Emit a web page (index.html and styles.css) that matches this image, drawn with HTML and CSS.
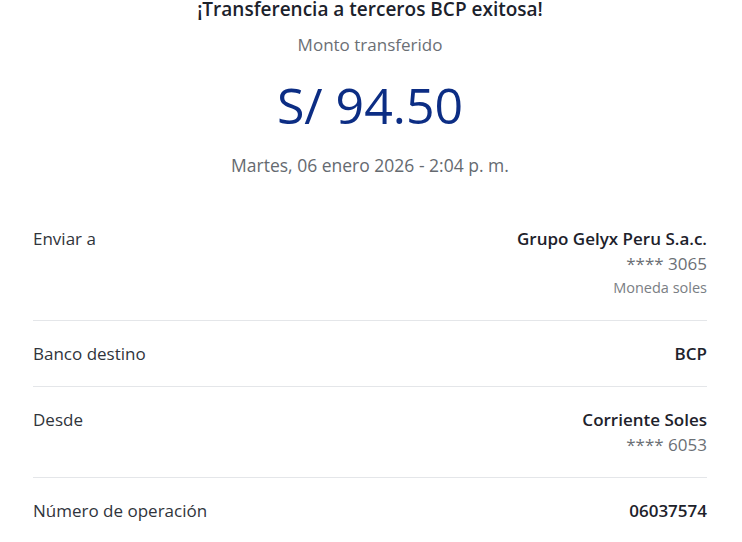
FILE: index.html
```html
<!DOCTYPE html>
<html lang="es">
<head>
<meta charset="utf-8">
<title>Transferencia exitosa</title>
<link rel="stylesheet" href="styles.css">
</head>
<body>
<main class="receipt">
  <header class="summary">
    <h1 class="title">¡Transferencia a terceros BCP exitosa!</h1>
    <p class="subtitle">Monto transferido</p>
    <p class="amount">S/ 94.50</p>
    <p class="date">Martes, 06 enero 2026 - 2:04 p. m.</p>
  </header>
  <section class="details">
    <div class="row">
      <span class="label">Enviar a</span>
      <div class="value">
        <span class="main">Grupo Gelyx Peru S.a.c.</span>
        <span class="sub">**** 3065</span>
        <span class="note">Moneda soles</span>
      </div>
    </div>
    <div class="row">
      <span class="label">Banco destino</span>
      <div class="value">
        <span class="main">BCP</span>
      </div>
    </div>
    <div class="row">
      <span class="label">Desde</span>
      <div class="value">
        <span class="main">Corriente Soles</span>
        <span class="sub">**** 6053</span>
      </div>
    </div>
    <div class="row">
      <span class="label">Número de operación</span>
      <div class="value">
        <span class="main">06037574</span>
      </div>
    </div>
  </section>
</main>
</body>
</html>
```
FILE: styles.css
```css
html, body {
  margin: 0;
  padding: 0;
  background: #ffffff;
}

body {
  font-family: "Open Sans", "Noto Sans", sans-serif;
  color: #2f333a;
  overflow: hidden;
}

.receipt {
  padding: 0 35px 0 33px;
}

.summary {
  text-align: center;
}

.title {
  margin: 0;
  font-size: 19px;
  line-height: 18px;
  font-weight: 600;
  color: #1c222c;
}

.subtitle {
  margin: 14.5px 0 0;
  font-size: 17px;
  line-height: 24px;
  color: #6b6f75;
}

.amount {
  margin: 18px 0 0;
  font-size: 50px;
  line-height: 60px;
  font-weight: 400;
  color: #0c2d84;
}

.date {
  margin: 18px 0 0;
  font-size: 17.5px;
  line-height: 24px;
  color: #656a70;
}

.details {
  margin-top: 29px;
}

.row {
  display: flex;
  justify-content: space-between;
  align-items: flex-start;
  padding: 21px 0 20px;
  border-bottom: 1px solid #e4e6e9;
}

.row:first-child {
  padding-bottom: 21.5px;
}

.row:last-child {
  border-bottom: none;
}

.label {
  font-size: 17px;
  line-height: 24px;
  color: #30343b;
}

.value {
  display: flex;
  flex-direction: column;
  align-items: flex-end;
  text-align: right;
}

.main {
  font-size: 17px;
  line-height: 24px;
  font-weight: 600;
  color: #1d222b;
}

.sub {
  margin-top: 1.5px;
  font-size: 17px;
  line-height: 24px;
  color: #6b6f75;
}

.note {
  margin-top: 2px;
  font-size: 14.5px;
  line-height: 20px;
  color: #7a7e84;
}
```
